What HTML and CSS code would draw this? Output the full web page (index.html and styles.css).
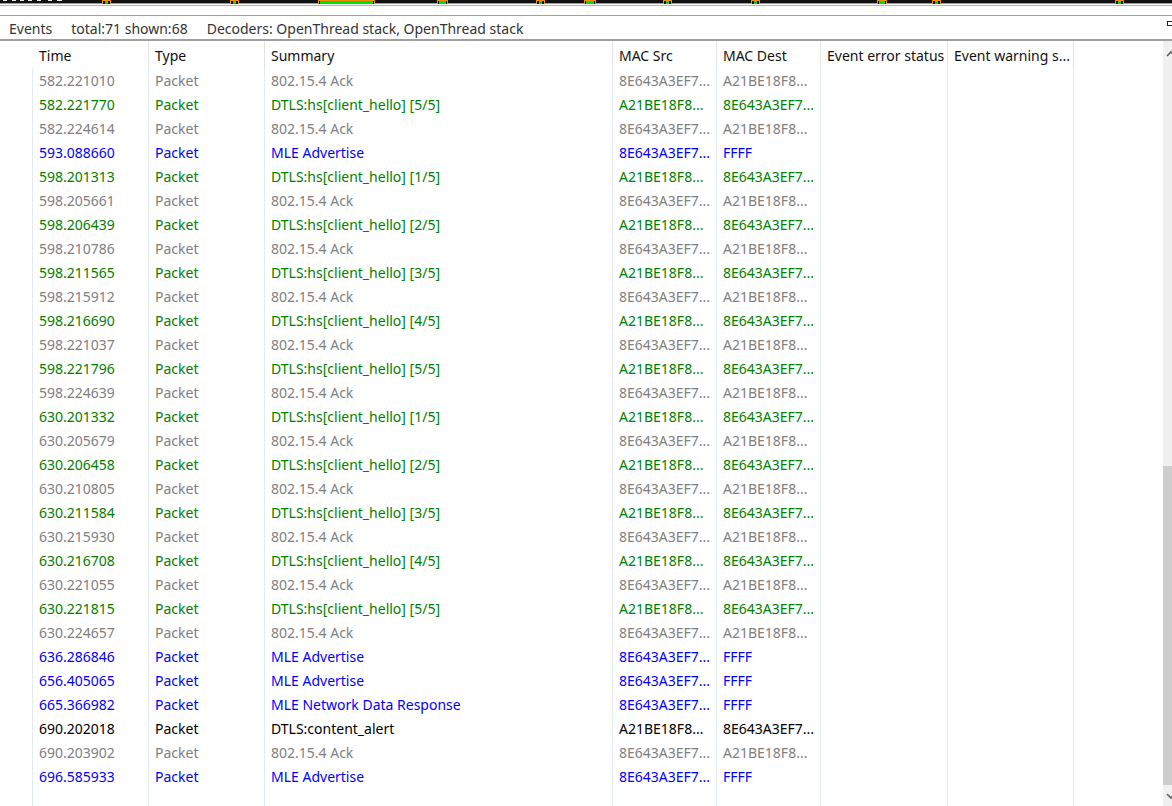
FILE: index.html
```html
<!DOCTYPE html>
<html lang="en">
<head>
    <meta charset="UTF-8">
    <title>Events</title>
    <link rel="stylesheet" href="styles.css">
</head>
<body>
    <div class="timeline">
        <div class="strip">
            <span class="tick" style="left:3px"></span>
            <span class="tick" style="left:12px"></span>
            <span class="tick" style="left:20px"></span>
            <span class="tick" style="left:28px"></span>
            <span class="tick" style="left:37px"></span>
            <span class="tick" style="left:48px"></span>
            <span class="tick" style="left:57px;width:5px"></span>
            <span class="mark" style="left:102px;width:9px"></span>
            <span class="mark" style="left:230px;width:9px"></span>
            <span class="mark wide" style="left:318px;width:57px"></span>
            <span class="mark wide" style="left:437px;width:11px"></span>
            <span class="mark" style="left:536px;width:9px"></span>
            <span class="mark wide" style="left:584px;width:12px"></span>
            <span class="mark" style="left:663px;width:9px"></span>
            <span class="mark" style="left:751px;width:9px"></span>
            <span class="mark wide" style="left:877px;width:10px"></span>
            <span class="mark" style="left:932px;width:9px"></span>
            <span class="mark" style="left:1115px;width:9px"></span>
        </div>
        <div class="ruler"></div>
    </div>

    <div class="toolbar">
        <span>Events</span>
        <span>total:71 shown:68</span>
        <span>Decoders: OpenThread stack, OpenThread stack</span>
        <span class="toolbar-btn"></span>
    </div>

    <div class="events">
        <div class="event-list">
            <div class="row head">
                <div class="cell">Time</div>
                <div class="cell">Type</div>
                <div class="cell">Summary</div>
                <div class="cell">MAC Src</div>
                <div class="cell">MAC Dest</div>
                <div class="cell">Event error status</div>
                <div class="cell">Event warning s...</div>
            </div>
            <div class="rows" id="rows"></div>
            <div class="row filler">
                <div class="cell"></div><div class="cell"></div><div class="cell"></div><div class="cell"></div>
                <div class="cell"></div><div class="cell"></div><div class="cell"></div>
            </div>
        </div>
        <div class="scrollbar">
            <svg class="arrow arrow-up" width="9" height="10" viewBox="0 0 9 10"><path d="M1 7 L5 3 L9 7" fill="none" stroke="#606060" stroke-width="1.6"/></svg>
            <div class="thumb"></div>
            <svg class="arrow arrow-down" width="9" height="10" viewBox="0 0 9 10"><path d="M1 3 L5 7 L9 3" fill="none" stroke="#606060" stroke-width="1.6"/></svg>
        </div>
    </div>

    <script>
        const SRC = '8E643A3EF7...';
        const DST = 'A21BE18F8...';

        // [time, kind, extra]
        const events = [
            ['582.221010', 'ack'],
            ['582.221770', 'hs', '[5/5]'],
            ['582.224614', 'ack'],
            ['593.088660', 'mle', 'MLE Advertise'],
            ['598.201313', 'hs', '[1/5]'],
            ['598.205661', 'ack'],
            ['598.206439', 'hs', '[2/5]'],
            ['598.210786', 'ack'],
            ['598.211565', 'hs', '[3/5]'],
            ['598.215912', 'ack'],
            ['598.216690', 'hs', '[4/5]'],
            ['598.221037', 'ack'],
            ['598.221796', 'hs', '[5/5]'],
            ['598.224639', 'ack'],
            ['630.201332', 'hs', '[1/5]'],
            ['630.205679', 'ack'],
            ['630.206458', 'hs', '[2/5]'],
            ['630.210805', 'ack'],
            ['630.211584', 'hs', '[3/5]'],
            ['630.215930', 'ack'],
            ['630.216708', 'hs', '[4/5]'],
            ['630.221055', 'ack'],
            ['630.221815', 'hs', '[5/5]'],
            ['630.224657', 'ack'],
            ['636.286846', 'mle', 'MLE Advertise'],
            ['656.405065', 'mle', 'MLE Advertise'],
            ['665.366982', 'mle', 'MLE Network Data Response'],
            ['690.202018', 'alert'],
            ['690.203902', 'ack'],
            ['696.585933', 'mle', 'MLE Advertise']
        ];

        const rows = document.getElementById('rows');
        events.forEach(([time, kind, extra]) => {
            let summary, src, dst;
            if (kind === 'ack') {
                summary = '802.15.4 Ack'; src = SRC; dst = DST;
            } else if (kind === 'hs') {
                summary = 'DTLS:hs[client_hello] ' + extra; src = DST; dst = SRC;
            } else if (kind === 'mle') {
                summary = extra; src = SRC; dst = 'FFFF';
            } else {
                summary = 'DTLS:content_alert'; src = DST; dst = SRC;
            }
            const row = document.createElement('div');
            row.className = 'row ' + kind;
            [time, 'Packet', summary, src, dst, '', ''].forEach(text => {
                const cell = document.createElement('div');
                cell.className = 'cell';
                cell.textContent = text;
                row.appendChild(cell);
            });
            rows.appendChild(row);
        });
    </script>
</body>
</html>
```

FILE: styles.css
```css
* {
    margin: 0;
    padding: 0;
    box-sizing: border-box;
}

body {
    font-family: 'Noto Sans', 'Open Sans', sans-serif;
    font-size: 14px;
    background: #fff;
    height: 806px;
    overflow: hidden;
    display: flex;
    flex-direction: column;
}

/* timeline strip at the very top */
.timeline {
    height: 16px;
    border-bottom: 1px solid #a0a0a0;
    flex-shrink: 0;
}

.strip {
    position: relative;
    height: 4px;
    background: #111;
    border-bottom: 1px solid #f28c00;
}

.tick {
    position: absolute;
    top: 0;
    width: 4px;
    height: 1px;
    background: #e8e8e8;
}

.mark {
    position: absolute;
    top: 0;
    height: 4px;
    border: 1px solid #f28c00;
    border-bottom: none;
    background: #111;
}

.mark::after {
    content: '';
    position: absolute;
    left: 2px;
    right: 2px;
    top: 0;
    bottom: 0;
    background: #00e000;
}

.mark.wide::after {
    left: 1px;
    right: 1px;
}

.ruler {
    margin-top: 1px;
    border-top: 1px solid #b4b4b4;
}

/* toolbar */
.toolbar {
    position: relative;
    height: 25px;
    display: flex;
    align-items: center;
    gap: 19px;
    padding-left: 9px;
    padding-top: 1px;
    color: #333;
    border-bottom: 2px solid #a0a0a0;
    flex-shrink: 0;
}

.toolbar-btn {
    position: absolute;
    right: -4px;
    top: 5px;
    width: 9px;
    height: 5px;
    border: 1px solid #222;
}

/* events table */
.events {
    flex: 1;
    display: flex;
    min-height: 0;
}

.event-list {
    flex: 1;
    display: flex;
    flex-direction: column;
    padding-left: 32px;
}

.rows {
    display: flex;
    flex-direction: column;
}

.row {
    display: grid;
    grid-template-columns: 116px 116px 348px 104px 104px 127px 126px;
    height: 24px;
    line-height: 24px;
    border-left: 1px solid #e3ebf7;
    width: max-content;
}

.cell {
    padding-left: 6px;
    padding-top: 1px;
    border-right: 1px solid #e3ebf7;
    white-space: nowrap;
    overflow: hidden;
}

.row.head {
    height: 27px;
    line-height: 24px;
    color: #111;
    border-left-color: #fff;
}

.row.head .cell {
    padding-top: 3px;
    border-right-color: #e4e4e4;
}

.row.filler {
    flex: 1;
    height: auto;
}

.row.ack { color: #808080; }
.row.hs { color: #008000; }
.row.mle { color: #0000ff; }
.row.alert { color: #000; }

/* scrollbar */
.scrollbar {
    position: relative;
    width: 9px;
    background: #f0f0f0;
    flex-shrink: 0;
}

.arrow {
    position: absolute;
    left: 3px;
}

.arrow-up {
    top: 8px;
}

.arrow-down {
    bottom: 5px;
}

.thumb {
    position: absolute;
    top: 425px;
    left: 0;
    right: 0;
    height: 319px;
    background: #cdcdcd;
}
```
